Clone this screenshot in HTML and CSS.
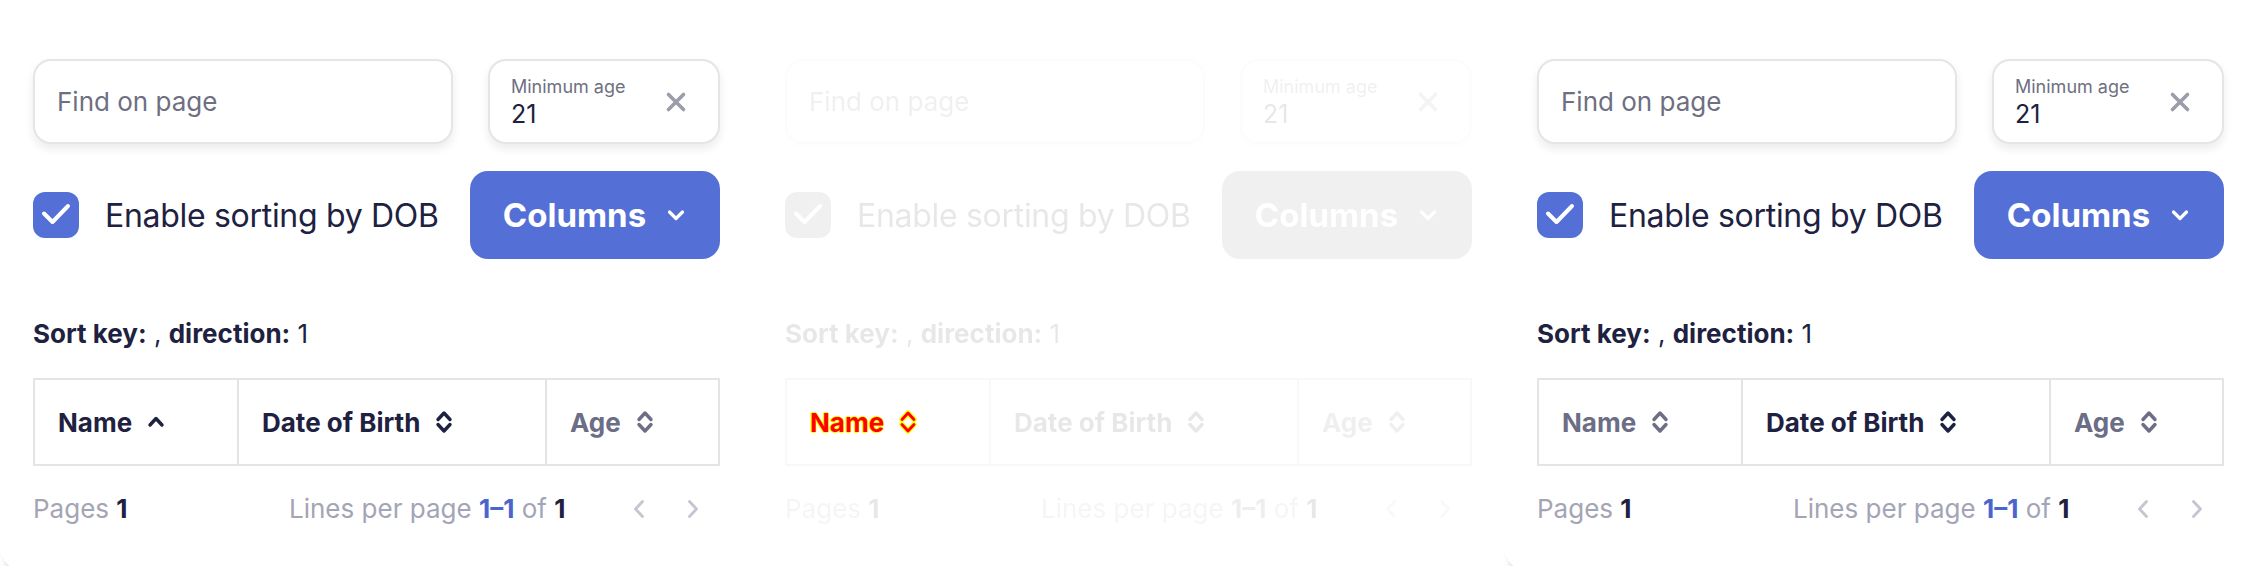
FILE: index.html
```html
<!DOCTYPE html>
<html lang="en">
<head>
<meta charset="utf-8">
<title>Sortable table demo</title>
<link rel="stylesheet" href="styles.css">
</head>
<body>
<div class="stage">

  <section class="panel">
    <div class="filters">
      <div class="search">Find on page</div>
      <div class="minage">
        <div class="minage-text"><span class="minage-label">Minimum age</span><span class="minage-value">21</span></div>
        <svg class="clear" viewBox="0 0 22 22" width="22" height="22"><path d="M3.5 3.5 18.5 18.5M18.5 3.5 3.5 18.5" fill="none" stroke="currentColor" stroke-width="3.6" stroke-linecap="round"/></svg>
      </div>
    </div>
    <div class="controls">
      <label class="check"><span class="box"><svg viewBox="0 0 46 46" width="46" height="46"><path d="M11 21.5 19.5 30 35 14" fill="none" stroke="#fff" stroke-width="4" stroke-linecap="round" stroke-linejoin="round"/></svg></span><span class="check-label">Enable sorting by DOB</span></label>
      <button class="columns">Columns <svg viewBox="0 0 22 22" width="22" height="22"><path d="M4.5 8 11 14.5 17.5 8" fill="none" stroke="currentColor" stroke-width="3.2" stroke-linecap="round" stroke-linejoin="round"/></svg></button>
    </div>
    <p class="sortinfo"><b>Sort key:</b> , <b>direction:</b> 1</p>
    <div class="grid">
      <div class="cell strong">Name <svg class="ico" viewBox="0 0 20 28" width="20" height="28"><path d="M4 17 10 10.5 16 17" fill="none" stroke="currentColor" stroke-width="3.4" stroke-linecap="round" stroke-linejoin="round"/></svg></div>
      <div class="cell strong">Date of Birth <svg class="ico" viewBox="0 0 20 28" width="20" height="28"><path d="M4 11.5 10 5 16 11.5M4 16.5 10 23 16 16.5" fill="none" stroke="currentColor" stroke-width="3.4" stroke-linecap="round" stroke-linejoin="round"/></svg></div>
      <div class="cell muted">Age <svg class="ico" viewBox="0 0 20 28" width="20" height="28"><path d="M4 11.5 10 5 16 11.5M4 16.5 10 23 16 16.5" fill="none" stroke="currentColor" stroke-width="3.4" stroke-linecap="round" stroke-linejoin="round"/></svg></div>
    </div>
    <div class="footer">
      <div class="pages">Pages <b>1</b></div>
      <div class="lines">Lines per page <b class="range">1–1</b> of <b>1</b></div>
      <div class="nav">
        <svg viewBox="0 0 14 22" width="14" height="22"><path d="M10.5 3.5 3.5 11 10.5 18.5" fill="none" stroke="currentColor" stroke-width="2.8" stroke-linecap="round" stroke-linejoin="round"/></svg>
        <svg viewBox="0 0 14 22" width="14" height="22"><path d="M3.5 3.5 10.5 11 3.5 18.5" fill="none" stroke="currentColor" stroke-width="2.8" stroke-linecap="round" stroke-linejoin="round"/></svg>
      </div>
    </div>
  </section>

  <section class="panel ghost">
    <div class="filters dim">
      <div class="search">Find on page</div>
      <div class="minage">
        <div class="minage-text"><span class="minage-label">Minimum age</span><span class="minage-value">21</span></div>
        <svg class="clear" viewBox="0 0 22 22" width="22" height="22"><path d="M3.5 3.5 18.5 18.5M18.5 3.5 3.5 18.5" fill="none" stroke="currentColor" stroke-width="3.6" stroke-linecap="round"/></svg>
      </div>
    </div>
    <div class="controls dim">
      <label class="check"><span class="box"><svg viewBox="0 0 46 46" width="46" height="46"><path d="M11 21.5 19.5 30 35 14" fill="none" stroke="#fff" stroke-width="4" stroke-linecap="round" stroke-linejoin="round"/></svg></span><span class="check-label">Enable sorting by DOB</span></label>
      <button class="columns">Columns <svg viewBox="0 0 22 22" width="22" height="22"><path d="M4.5 8 11 14.5 17.5 8" fill="none" stroke="currentColor" stroke-width="3.2" stroke-linecap="round" stroke-linejoin="round"/></svg></button>
    </div>
    <p class="sortinfo dim"><b>Sort key:</b> , <b>direction:</b> 1</p>
    <div class="grid">
      <div class="cell flagged">Name <svg class="ico" viewBox="0 0 20 28" width="20" height="28"><path d="M4 11.5 10 5 16 11.5M4 16.5 10 23 16 16.5" fill="none" stroke="#ffff00" stroke-width="5.4" stroke-linecap="round" stroke-linejoin="round"/><path d="M4 11.5 10 5 16 11.5M4 16.5 10 23 16 16.5" fill="none" stroke="#ff0000" stroke-width="2.8" stroke-linecap="round" stroke-linejoin="round"/></svg></div>
      <div class="cell strong"><span class="dim">Date of Birth</span> <svg class="ico dim" viewBox="0 0 20 28" width="20" height="28"><path d="M4 11.5 10 5 16 11.5M4 16.5 10 23 16 16.5" fill="none" stroke="currentColor" stroke-width="3.4" stroke-linecap="round" stroke-linejoin="round"/></svg></div>
      <div class="cell muted"><span class="dim">Age</span> <svg class="ico dim" viewBox="0 0 20 28" width="20" height="28"><path d="M4 11.5 10 5 16 11.5M4 16.5 10 23 16 16.5" fill="none" stroke="currentColor" stroke-width="3.4" stroke-linecap="round" stroke-linejoin="round"/></svg></div>
    </div>
    <div class="footer dim">
      <div class="pages">Pages <b>1</b></div>
      <div class="lines">Lines per page <b class="range">1–1</b> of <b>1</b></div>
      <div class="nav">
        <svg viewBox="0 0 14 22" width="14" height="22"><path d="M10.5 3.5 3.5 11 10.5 18.5" fill="none" stroke="currentColor" stroke-width="2.8" stroke-linecap="round" stroke-linejoin="round"/></svg>
        <svg viewBox="0 0 14 22" width="14" height="22"><path d="M3.5 3.5 10.5 11 3.5 18.5" fill="none" stroke="currentColor" stroke-width="2.8" stroke-linecap="round" stroke-linejoin="round"/></svg>
      </div>
    </div>
  </section>

  <section class="panel">
    <div class="filters">
      <div class="search">Find on page</div>
      <div class="minage">
        <div class="minage-text"><span class="minage-label">Minimum age</span><span class="minage-value">21</span></div>
        <svg class="clear" viewBox="0 0 22 22" width="22" height="22"><path d="M3.5 3.5 18.5 18.5M18.5 3.5 3.5 18.5" fill="none" stroke="currentColor" stroke-width="3.6" stroke-linecap="round"/></svg>
      </div>
    </div>
    <div class="controls">
      <label class="check"><span class="box"><svg viewBox="0 0 46 46" width="46" height="46"><path d="M11 21.5 19.5 30 35 14" fill="none" stroke="#fff" stroke-width="4" stroke-linecap="round" stroke-linejoin="round"/></svg></span><span class="check-label">Enable sorting by DOB</span></label>
      <button class="columns">Columns <svg viewBox="0 0 22 22" width="22" height="22"><path d="M4.5 8 11 14.5 17.5 8" fill="none" stroke="currentColor" stroke-width="3.2" stroke-linecap="round" stroke-linejoin="round"/></svg></button>
    </div>
    <p class="sortinfo"><b>Sort key:</b> , <b>direction:</b> 1</p>
    <div class="grid">
      <div class="cell muted">Name <svg class="ico" viewBox="0 0 20 28" width="20" height="28"><path d="M4 11.5 10 5 16 11.5M4 16.5 10 23 16 16.5" fill="none" stroke="currentColor" stroke-width="3.4" stroke-linecap="round" stroke-linejoin="round"/></svg></div>
      <div class="cell strong">Date of Birth <svg class="ico" viewBox="0 0 20 28" width="20" height="28"><path d="M4 11.5 10 5 16 11.5M4 16.5 10 23 16 16.5" fill="none" stroke="currentColor" stroke-width="3.4" stroke-linecap="round" stroke-linejoin="round"/></svg></div>
      <div class="cell muted">Age <svg class="ico" viewBox="0 0 20 28" width="20" height="28"><path d="M4 11.5 10 5 16 11.5M4 16.5 10 23 16 16.5" fill="none" stroke="currentColor" stroke-width="3.4" stroke-linecap="round" stroke-linejoin="round"/></svg></div>
    </div>
    <div class="footer">
      <div class="pages">Pages <b>1</b></div>
      <div class="lines">Lines per page <b class="range">1–1</b> of <b>1</b></div>
      <div class="nav">
        <svg viewBox="0 0 14 22" width="14" height="22"><path d="M10.5 3.5 3.5 11 10.5 18.5" fill="none" stroke="currentColor" stroke-width="2.8" stroke-linecap="round" stroke-linejoin="round"/></svg>
        <svg viewBox="0 0 14 22" width="14" height="22"><path d="M3.5 3.5 10.5 11 3.5 18.5" fill="none" stroke="currentColor" stroke-width="2.8" stroke-linecap="round" stroke-linejoin="round"/></svg>
      </div>
    </div>
  </section>

</div>
</body>
</html>
```

FILE: styles.css
```css
* { box-sizing: border-box; }
html, body { margin: 0; padding: 0; }
body {
  background: #ffffff;
  font-family: Inter, "Noto Sans", "Liberation Sans", sans-serif;
  color: #1e2140;
  overflow: hidden;
}
.stage {
  display: flex;
  height: 566px;
  overflow: hidden;
}
.panel {
  flex: 0 0 752px;
  height: 572px;
  background: #ffffff;
  border-radius: 0 0 0 26px;
  box-shadow: 0 12px 10px -10px rgba(0, 0, 0, 0.55);
  padding: 59px 32px 0 33px;
  display: flex;
  flex-direction: column;
}
.panel.ghost { box-shadow: 0 12px 10px -10px rgba(0, 0, 0, 0.08); }

.dim { opacity: 0.1; filter: grayscale(1); }

/* filter row */
.filters {
  display: flex;
  gap: 35px;
  height: 85px;
}
.search, .minage {
  border: 2px solid #e5e5e8;
  border-radius: 18px;
  background: #fff;
  box-shadow: 0 5px 10px rgba(0, 0, 0, 0.08);
  display: flex;
  align-items: center;
}
.search {
  width: 420px;
  padding-left: 22px;
  font-size: 26px;
  color: #6e7082;
}
.minage {
  flex: 1;
  padding: 0 31px 0 21px;
  justify-content: space-between;
}
.minage-text { display: flex; flex-direction: column; gap: 2px; }
.minage-label { font-size: 18px; line-height: 22px; color: #6e7082; }
.minage-value { font-size: 25px; line-height: 28px; color: #1e2140; }
.clear { color: #9c9caa; display: block; }

/* controls row */
.controls {
  margin-top: 27px;
  height: 88px;
  display: flex;
  align-items: center;
  justify-content: space-between;
}
.check { display: flex; align-items: center; gap: 26px; }
.box {
  width: 46px; height: 46px;
  border-radius: 12px;
  background: #5470d6;
  display: block;
}
.box svg { display: block; }
.check-label { font-size: 32px; color: #1e2140; letter-spacing: -0.3px; }
.columns {
  width: 250px;
  height: 88px;
  border: 0;
  border-radius: 18px;
  background: #5470d6;
  color: #fff;
  font-family: inherit;
  font-size: 33px;
  font-weight: 700;
  display: flex;
  align-items: center;
  justify-content: center;
  gap: 19px;
  padding: 0;
}
.columns svg { display: block; }

/* sort info */
.sortinfo {
  margin: 60px 0 0;
  font-size: 26px;
  line-height: 30px;
  color: #1e2140;
}
.sortinfo b { font-weight: 700; }

/* header grid */
.grid {
  margin-top: 29px;
  display: grid;
  grid-template-columns: 202px 308px 1fr;
  height: 88px;
  border: 2px solid #e4e4e6;
}
.ghost .grid { border-color: #f8f8f8; }
.cell {
  display: flex;
  align-items: center;
  gap: 14px;
  padding-left: 23px;
  font-size: 26px;
  font-weight: 700;
}
.cell + .cell { border-left: 2px solid #e4e4e6; }
.ghost .cell + .cell { border-left-color: #f8f8f8; }
.cell .ico { display: block; }
.strong { color: #1e2140; }
.muted { color: #6b6e85; }
.flagged {
  color: #ff0000;
  text-shadow: 1px 0 #ffff00, -1px 0 #ffff00, 0 1px #ffff00, 0 -1px #ffff00;
}

/* footer */
.footer {
  margin-top: 28px;
  display: flex;
  align-items: center;
  font-size: 26px;
  line-height: 30px;
  color: #a3a5b6;
}
.footer b { color: #1e2140; font-weight: 700; }
.footer b.range { color: #4a65cc; }
.pages { width: 256px; }
.nav {
  margin-left: auto;
  margin-right: 20px;
  display: flex;
  gap: 40px;
  color: #c4c6d0;
}
.nav svg { display: block; }
```
